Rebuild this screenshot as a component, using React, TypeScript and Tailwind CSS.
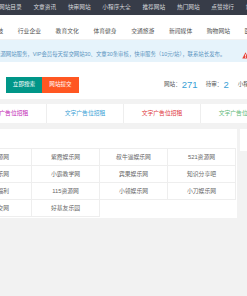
import React from "react";

const nav = ["网站目录", "文章资讯", "快审网站", "小程序大全", "推荐网站", "热门网站", "点赞排行", "站长工具"];
const cats = ["网络科技", "行业企业", "教育文化", "体育健身", "交通旅游", "新闻媒体", "购物网站", "医疗健康"];
const ads = [
  { t: "文字广告位招租", c: "text-[#c21fb5]" },
  { t: "文字广告位招租", c: "text-[#3a9fd6]" },
  { t: "文字广告位招租", c: "text-[#e0383e]" },
  { t: "文字广告位招租", c: "text-[#5fb878]" },
];
const rows = [
  ["爱资源网", "紫霞娱乐网", "叔牛逼娱乐网", "521资源网"],
  ["小小乐网", "小霸教学网", "宾果娱乐网", "知识分享吧"],
  ["资源福利", "115资源网", "小领娱乐网", "小刀娱乐网"],
  ["秒提交网", "好基友乐园"],
];

export default function App() {
  return (
    <div className="w-[247px] h-[296px] overflow-hidden bg-[#f2f2f2] font-['Liberation_Sans','Noto_Sans_CJK_SC',sans-serif] leading-none whitespace-nowrap">
      {/* top nav */}
      <div className="h-[15px] bg-[#373c48] flex items-center">
        <div className="flex items-center gap-[11.7px] ml-[-1px] text-[5.7px] text-[#d4d6da]">
          {nav.map((n) => (
            <span key={n}>{n}</span>
          ))}
        </div>
      </div>
      {/* categories */}
      <div className="h-[24px] bg-white flex items-end pb-[4px]">
        <div className="flex items-center gap-[14.6px] ml-[-20px] text-[5.8px] text-[#555]">
          {cats.map((n) => (
            <span key={n}>{n}</span>
          ))}
        </div>
      </div>
      {/* notice */}
      <div className="mt-[1px] h-[22px] bg-[#e6f3fb] flex items-center pt-[8px]">
        <div className="flex items-center ml-[-5px] text-[5.4px] text-[#5a93bf]">
          <span>速源网站服务，VIP会员每天提交网站30、文章30条审核，快审服务（10元/站），联系站长发布。</span>
          <svg className="ml-[17px] shrink-0" width="7" height="7" viewBox="0 0 10 10">
            <path d="M5 0.5 L9.6 9.2 L0.4 9.2 Z" fill="#e8443a" />
            <rect x="4.4" y="3.4" width="1.2" height="3.2" fill="#fff" />
            <rect x="4.4" y="7.2" width="1.2" height="1.1" fill="#fff" />
          </svg>
        </div>
      </div>
      {/* search panel */}
      <div className="h-[37px] bg-white flex items-start pt-[15px]">
        <div className="ml-[6px] flex">
          <div className="w-[36px] h-[16px] bg-[#009688] text-white text-[5.6px] flex items-center justify-center">立即搜索</div>
          <div className="w-[37px] h-[16px] bg-[#ff5722] text-white text-[5.6px] flex items-center justify-center">网站提交</div>
        </div>
        <div className="ml-[85px] h-[16px] flex items-center text-[5.6px] text-[#555]">
          <span>网站：</span>
          <span className="text-[9.5px] text-[#3a9fd6] ml-[1px]">271</span>
          <span className="ml-[8px]">待审：</span>
          <span className="text-[9.5px] text-[#3a9fd6] ml-[1px]">2</span>
          <span className="ml-[9px]">小程序：</span>
        </div>
      </div>
      {/* ads */}
      <div className="mt-[5px] h-[19px] bg-white flex">
        <div className="flex ml-[-30px]">
          {ads.map((a, i) => (
            <div key={i} className={`w-[77px] h-[19px] border-r border-[#eeeeee] flex items-center justify-center text-[5.8px] ${a.c}`}>
              {a.t}
            </div>
          ))}
        </div>
      </div>
      {/* table */}
      <div className="mt-[6px] flex gap-[3px]">
        <div className="w-[237px] h-[89px] bg-white shrink-0">
          <div className="h-[20px] border-b border-[#eeeeee] ml-[-36px] w-[272px]"></div>
          <div className="ml-[-36px] w-[272px] grid grid-cols-4">
            {rows.map((r, ri) =>
              r.map((c, ci) => (
                <div
                  key={ri + "-" + ci}
                  className="h-[17px] border-r border-b border-[#eeeeee] flex items-center justify-center pt-[2px] text-[5.8px] text-[#666]"
                >
                  {c}
                </div>
              ))
            )}
          </div>
        </div>
        <div className="w-[40px] h-[22px] bg-white shrink-0"></div>
      </div>
    </div>
  );
}
